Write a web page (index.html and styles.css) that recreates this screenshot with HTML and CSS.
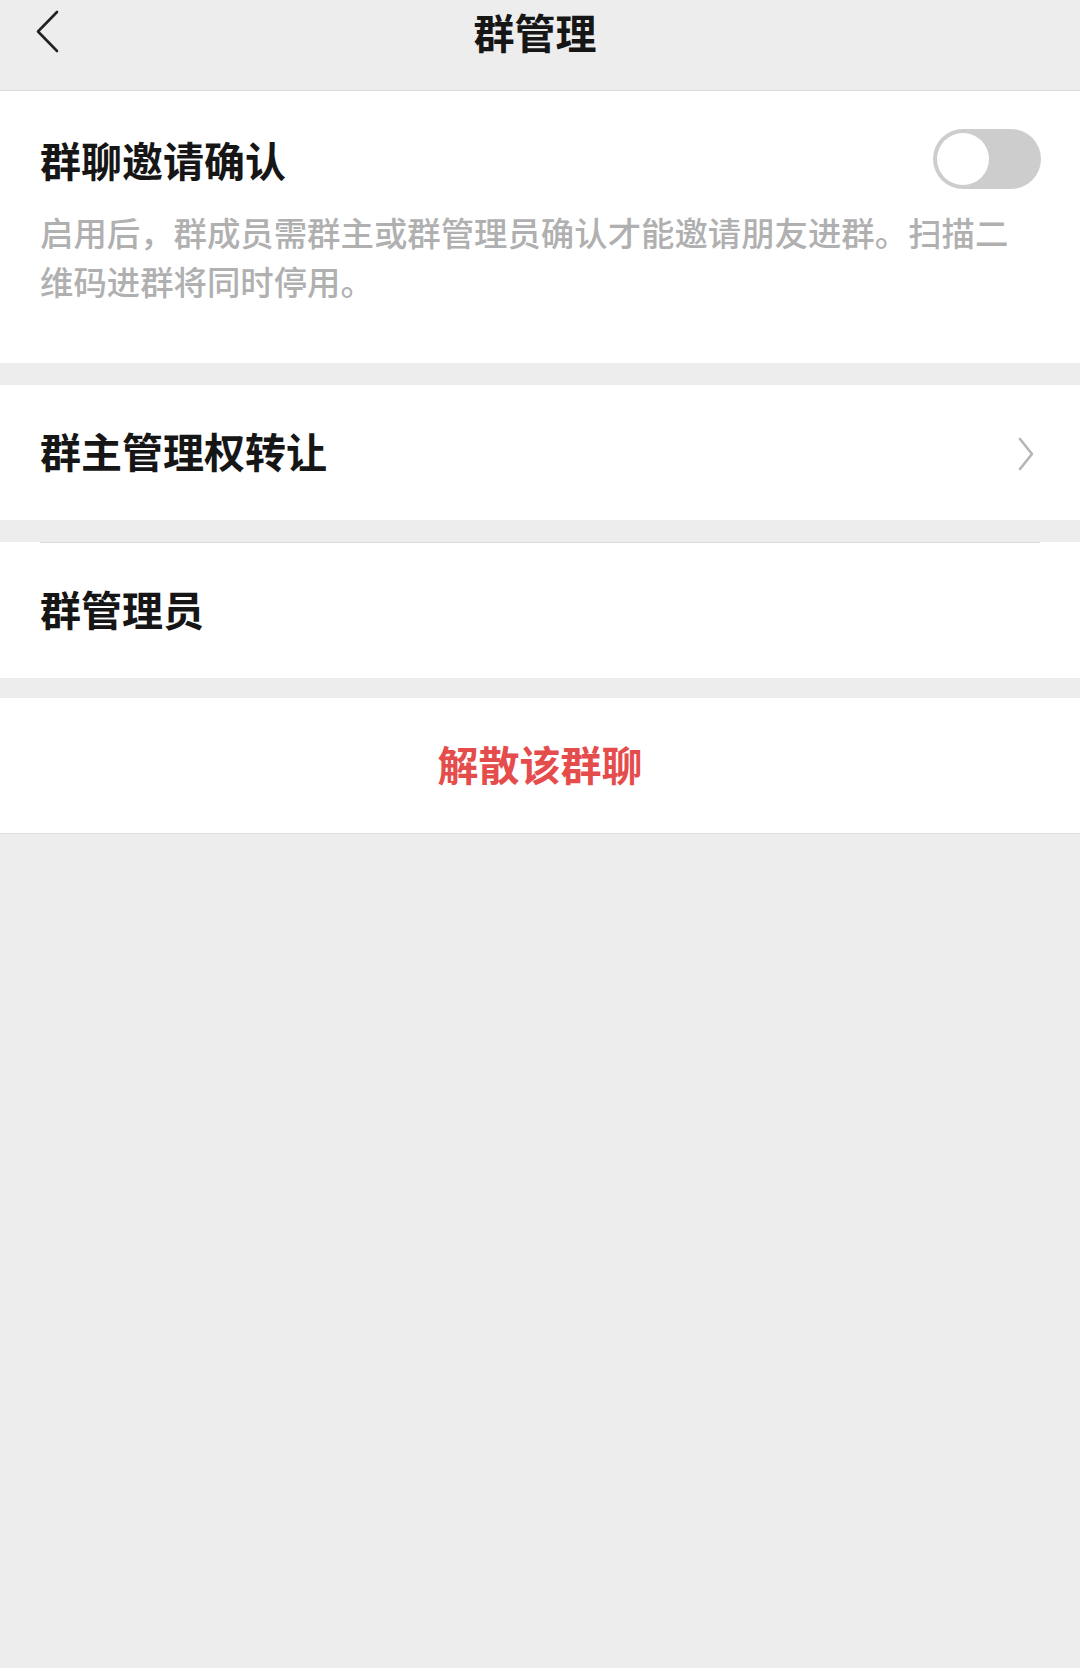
FILE: index.html
```html
<!DOCTYPE html>
<html lang="zh-CN">
<head>
<meta charset="utf-8">
<title>群管理</title>
<link rel="stylesheet" href="styles.css">
</head>
<body>
<div class="page">
  <header class="nav">
    <svg class="nav-back" width="30" height="46" viewBox="0 0 30 46" aria-hidden="true">
      <path d="M24 3 L5 22.5 L24 42" fill="none" stroke="#222" stroke-width="2.6" stroke-linecap="round" stroke-linejoin="round"/>
    </svg>
    <h1 class="nav-title">群管理</h1>
  </header>

  <section class="group group-first">
    <div class="switch-row">
      <span class="cell-title">群聊邀请确认</span>
      <span class="switch" role="switch" aria-checked="false"><span class="switch-knob"></span></span>
    </div>
    <p class="cell-desc">启用后，群成员需群主或群管理员确认才能邀请朋友进群。扫描二维码进群将同时停用。</p>
  </section>

  <section class="group">
    <div class="cell">
      <span class="cell-title">群主管理权转让</span>
      <svg class="cell-arrow" width="20" height="36" viewBox="0 0 20 36" aria-hidden="true">
        <path d="M4 3 L16 18 L4 33" fill="none" stroke="#b5b5b5" stroke-width="2.6" stroke-linecap="round" stroke-linejoin="round"/>
      </svg>
    </div>
  </section>

  <section class="group group-lined">
    <div class="cell cell-tall">
      <span class="cell-title">群管理员</span>
    </div>
  </section>

  <section class="group group-danger">
    <div class="cell cell-center">
      <span class="danger-text">解散该群聊</span>
    </div>
  </section>
</div>
</body>
</html>
```

FILE: styles.css
```css
html, body {
  margin: 0;
  padding: 0;
}

body {
  background: #ededed;
  font-family: "Noto Sans CJK SC", "Noto Sans", sans-serif;
  color: #161616;
  width: 1080px;
  min-height: 1668px;
}

.page {
  display: flex;
  flex-direction: column;
}

/* top navigation bar */
.nav {
  height: 90px;
  border-bottom: 1px solid #dcdcdc;
  display: flex;
  align-items: flex-start;
  justify-content: center;
  position: relative;
}

.nav-back {
  position: absolute;
  left: 33px;
  top: 9px;
}

.nav-title {
  margin: 0;
  padding: 3px 10px 0 0;
  font-size: 41px;
  line-height: 56px;
  font-weight: 700;
  color: #161616;
}

/* white groups */
.group {
  background: #ffffff;
  margin-top: 22px;
}

.group-first {
  margin-top: 0;
  padding: 30px 0 58px 40px;
}

.group-lined {
  margin-top: 22px;
  position: relative;
}

.group-lined::before {
  content: "";
  position: absolute;
  left: 40px;
  right: 40px;
  top: 0;
  height: 1px;
  background: #dadada;
}

.group-danger {
  margin-top: 20px;
  border-bottom: 1px solid #dedede;
}

.switch-row {
  display: flex;
  align-items: center;
  justify-content: space-between;
  padding-right: 39px;
  height: 76px;
}

.cell-title {
  font-size: 41px;
  line-height: 56px;
  font-weight: 700;
  color: #161616;
}

.cell-desc {
  margin: 10px 0 0;
  padding-right: 62px;
  font-size: 33.4px;
  line-height: 49px;
  font-weight: 500;
  color: #b0b0b0;
}

/* toggle, off state */
.switch {
  width: 108px;
  height: 60px;
  border-radius: 30px;
  background: #cdcdcd;
  display: flex;
  align-items: center;
  padding: 0 4px;
  box-sizing: border-box;
}

.switch-knob {
  width: 52px;
  height: 52px;
  border-radius: 50%;
  background: #ffffff;
}

.cell {
  height: 135px;
  box-sizing: border-box;
  display: flex;
  align-items: center;
  justify-content: space-between;
  padding: 0 44px 5px 40px;
}

.cell-tall {
  height: 136px;
}

.cell-arrow {
  margin-top: 7px;
}

.cell-center {
  justify-content: center;
  padding: 0 0 5px;
}

.danger-text {
  font-size: 41px;
  line-height: 56px;
  font-weight: 700;
  color: #e54d4d;
}
```
